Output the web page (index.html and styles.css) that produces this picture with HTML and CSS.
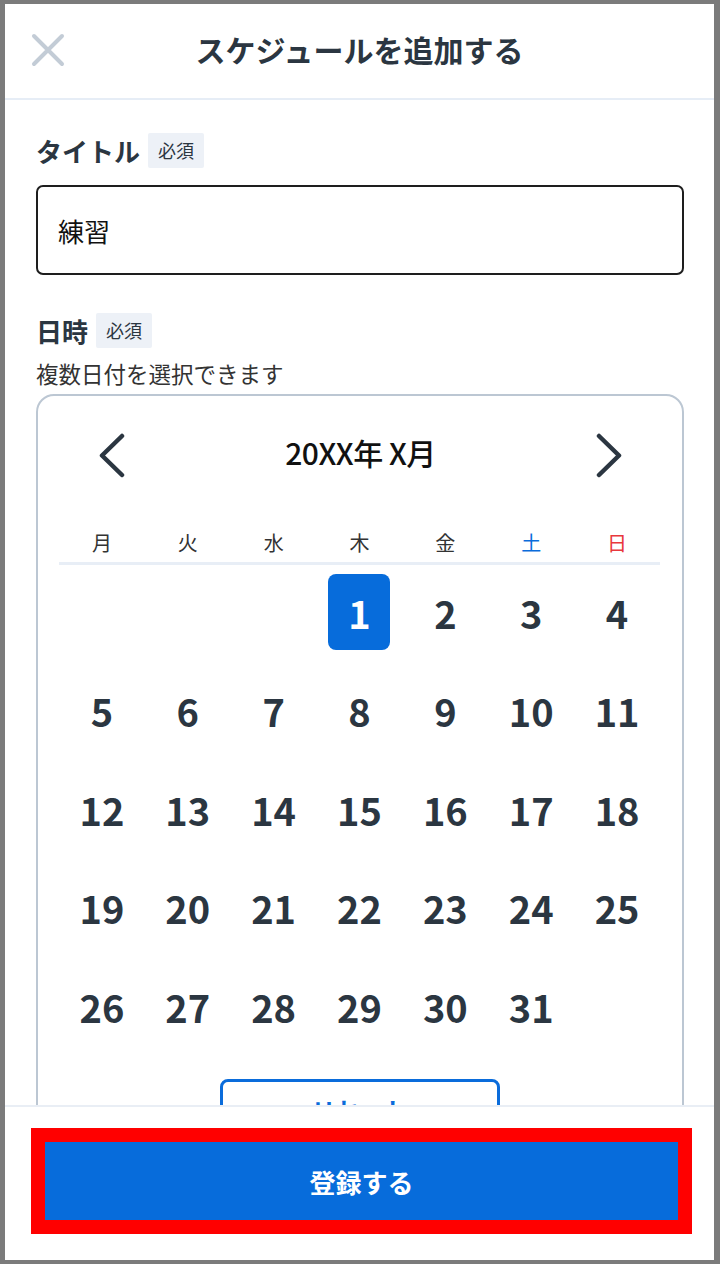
FILE: index.html
```html
<!DOCTYPE html>
<html lang="ja">
<head>
<meta charset="utf-8">
<title>スケジュールを追加する</title>
<link rel="stylesheet" href="styles.css">
</head>
<body>
<div class="frame">
  <header class="header">
    <div class="close">
      <svg width="34" height="34" viewBox="0 0 34 34"><path d="M3 3 L31 31 M31 3 L3 31" stroke="#c3ccd6" stroke-width="4" stroke-linecap="round" fill="none"/></svg>
    </div>
    <h1 class="title">スケジュールを追加する</h1>
    <div></div>
  </header>

  <main class="main">
    <div class="label-row">
      <span class="label">タイトル</span><span class="badge">必須</span>
    </div>
    <div class="input">練習</div>

    <div class="label-row date-row">
      <span class="label">日時</span><span class="badge">必須</span>
    </div>
    <p class="hint">複数日付を選択できます</p>

    <section class="calendar">
      <div class="cal-head">
        <svg class="chev" width="26" height="45" viewBox="0 0 26 45"><polyline points="23,3 3,22.5 23,42" stroke="#2b3641" stroke-width="4.5" stroke-linecap="round" stroke-linejoin="round" fill="none"/></svg>
        <span class="month">20XX年 X月</span>
        <svg class="chev" width="26" height="45" viewBox="0 0 26 45"><polyline points="3,3 23,22.5 3,42" stroke="#2b3641" stroke-width="4.5" stroke-linecap="round" stroke-linejoin="round" fill="none"/></svg>
      </div>
      <div class="weekdays">
        <span>月</span><span>火</span><span>水</span><span>木</span><span>金</span><span class="sat">土</span><span class="sun">日</span>
      </div>
      <div class="days">
        <div class="day"></div><div class="day"></div><div class="day"></div>
        <div class="day"><span class="sel">1</span></div>
        <div class="day"><span>2</span></div>
        <div class="day"><span>3</span></div>
        <div class="day"><span>4</span></div>
        <div class="day"><span>5</span></div>
        <div class="day"><span>6</span></div>
        <div class="day"><span>7</span></div>
        <div class="day"><span>8</span></div>
        <div class="day"><span>9</span></div>
        <div class="day"><span>10</span></div>
        <div class="day"><span>11</span></div>
        <div class="day"><span>12</span></div>
        <div class="day"><span>13</span></div>
        <div class="day"><span>14</span></div>
        <div class="day"><span>15</span></div>
        <div class="day"><span>16</span></div>
        <div class="day"><span>17</span></div>
        <div class="day"><span>18</span></div>
        <div class="day"><span>19</span></div>
        <div class="day"><span>20</span></div>
        <div class="day"><span>21</span></div>
        <div class="day"><span>22</span></div>
        <div class="day"><span>23</span></div>
        <div class="day"><span>24</span></div>
        <div class="day"><span>25</span></div>
        <div class="day"><span>26</span></div>
        <div class="day"><span>27</span></div>
        <div class="day"><span>28</span></div>
        <div class="day"><span>29</span></div>
        <div class="day"><span>30</span></div>
        <div class="day"><span>31</span></div>
      </div>
      <div class="reset">リセット</div>
    </section>
  </main>

  <footer class="footer">
    <div class="submit">登録する</div>
  </footer>
</div>
</body>
</html>
```

FILE: styles.css
```css
html, body {
  margin: 0;
  padding: 0;
  background: #ffffff;
}

.frame {
  width: 720px;
  height: 1264px;
  box-sizing: border-box;
  border-style: solid;
  border-color: #7b7b7b;
  border-width: 4px 6px 4px 5px;
  display: flex;
  flex-direction: column;
  background: #ffffff;
  font-family: "Noto Sans CJK JP", "Noto Sans", sans-serif;
  color: #2b3641;
  overflow: hidden;
}

.header {
  height: 94px;
  flex: none;
  border-bottom: 2px solid #e6edf6;
  display: grid;
  grid-template-columns: 1fr auto 1fr;
  align-items: center;
}

.close {
  padding-left: 26px;
  display: flex;
  align-items: center;
  padding-bottom: 2px;
}

.close svg {
  display: block;
}

.title {
  margin: 0;
  font-size: 30px;
  font-weight: 700;
  color: #2b3641;
  line-height: 40px;
  padding-bottom: 4px;
}

.main {
  flex: 1;
  overflow: hidden;
  padding: 33px 30px 0 31px;
}

.label-row {
  display: flex;
  align-items: center;
  gap: 8px;
  height: 35px;
}

.label {
  font-size: 26px;
  font-weight: 700;
  line-height: 35px;
  color: #2b3641;
}

.badge {
  background: #edf1f7;
  font-size: 18px;
  line-height: 35px;
  padding: 0 10px;
  border-radius: 2px;
  color: #2b3641;
}

.input {
  margin-top: 17px;
  height: 90px;
  box-sizing: border-box;
  border: 2px solid #1e1e1e;
  border-radius: 7px;
  padding-left: 20px;
  display: flex;
  align-items: center;
  font-size: 26px;
  color: #111111;
}

.date-row {
  margin-top: 38px;
}

.hint {
  margin: 11px 0 0;
  font-size: 22.5px;
  line-height: 28px;
  color: #333333;
}

.calendar {
  margin-top: 7px;
  border: 2px solid #bcc7d3;
  border-radius: 18px;
  padding: 0 22px 40px 21px;
}

.cal-head {
  margin-top: 37px;
  height: 45px;
  display: flex;
  justify-content: space-between;
  align-items: center;
  padding: 0 38px 0 40px;
}

.chev {
  display: block;
}

.month {
  font-size: 30px;
  font-weight: 500;
  color: #111111;
  line-height: 45px;
  padding-bottom: 6px;
  letter-spacing: -0.5px;
}

.weekdays {
  margin-top: 50px;
  display: grid;
  grid-template-columns: repeat(7, 1fr);
  border-bottom: 3px solid #e8eef6;
  padding-bottom: 4px;
}

.weekdays span {
  text-align: center;
  font-size: 20px;
  line-height: 30px;
  color: #333333;
}

.weekdays .sat {
  color: #0a6cdb;
}

.weekdays .sun {
  color: #e8383d;
}

.days {
  margin-top: 9px;
  display: grid;
  grid-template-columns: repeat(7, 1fr);
  grid-auto-rows: 76px;
  row-gap: 22.5px;
}

.day {
  display: flex;
  justify-content: center;
}

.day span {
  width: 62px;
  height: 76px;
  display: flex;
  align-items: center;
  justify-content: center;
  font-size: 38px;
  font-weight: 700;
  color: #2b3641;
  border-radius: 8px;
}

.day .sel {
  background: #076cdb;
  color: #ffffff;
}

.reset {
  margin: 35px auto 0;
  width: 280px;
  height: 60px;
  box-sizing: border-box;
  border: 3px solid #0a6cdb;
  border-radius: 8px;
  display: flex;
  align-items: center;
  justify-content: center;
  font-size: 24px;
  font-weight: 700;
  color: #0a6cdb;
}

.footer {
  flex: none;
  border-top: 2px solid #e9eef5;
  padding: 21px 22px 26px 26px;
  background: #ffffff;
}

.submit {
  height: 106px;
  box-sizing: border-box;
  border: 14px solid #ff0000;
  background: #076cdb;
  display: flex;
  align-items: center;
  justify-content: center;
  font-size: 26px;
  font-weight: 700;
  color: #ffffff;
}
```
